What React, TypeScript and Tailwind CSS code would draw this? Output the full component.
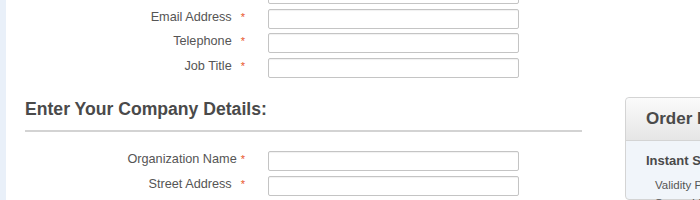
import React from "react";

const topFields = [
  { label: "Email Address", gap: "ml-[9px]" },
  { label: "Telephone", gap: "ml-[9px]" },
  { label: "Job Title", gap: "ml-[9px]" },
];

const companyFields = [
  { label: "Organization Name", gap: "ml-[4px]" },
  { label: "Street Address", gap: "ml-[9px]" },
];

function FieldRow({ label, gap }: { label: string; gap: string }) {
  return (
    <div className="flex items-center h-[20px]">
      <label className="w-[220px] pb-[3px] text-right text-[12.7px] text-[#555] leading-none">
        {label}
        <span className={`${gap} text-[#e8562a] text-[11px]`}>*</span>
      </label>
      <input
        type="text"
        className="ml-[23px] w-[251px] h-[20px] border border-[#c4c4c4] rounded-[2px] bg-white shadow-[inset_0_1px_1px_rgba(0,0,0,0.06)]"
      />
    </div>
  );
}

export default function App() {
  return (
    <div className="flex w-[700px] h-[200px] overflow-hidden bg-white font-['Liberation_Sans',Arial,sans-serif]">
      <div className="w-[6px] shrink-0 bg-[#e9f0f9]" />

      <div className="ml-[19px] w-[557px] shrink-0">
        <div className="-mt-[16px] flex flex-col gap-[4.5px]">
          <div className="flex h-[20px]">
            <div className="ml-[243px] w-[251px] h-[20px] border border-[#c4c4c4] rounded-[2px]" />
          </div>
          {topFields.map((f) => (
            <FieldRow key={f.label} label={f.label} gap={f.gap} />
          ))}
        </div>

        <h2 className="mt-[21px] text-[17.6px] font-bold text-[#4a4a4a] leading-[20px]">
          Enter Your Company Details:
        </h2>
        <div className="mt-[11px] h-[2px] bg-[#d3d3d3]" />

        <div className="mt-[19px] flex flex-col gap-[5px]">
          {companyFields.map((f) => (
            <FieldRow key={f.label} label={f.label} gap={f.gap} />
          ))}
        </div>
      </div>

      <div className="ml-[43px] mt-[97px] w-[200px] shrink-0 border border-[#d4d4d4] rounded-[4px] bg-[#f1f5fa]">
        <div className="h-[43px] flex items-center pl-[20px] rounded-t-[4px] border-b border-[#d4d4d4] bg-gradient-to-b from-[#fbfbfb] to-[#e6e6e6]">
          <span className="text-[17px] font-bold text-[#4a4a4a]">Order Details</span>
        </div>
        <div className="pl-[20px] pt-[12px]">
          <div className="text-[13px] font-bold text-[#4a4a4a] leading-[16px]">Instant SSL</div>
          <div className="mt-[7px] pl-[9px] text-[11.5px] text-[#555] leading-[18px]">Validity Period</div>
          <div className="pl-[9px] text-[11.5px] text-[#555] leading-[18px]">Server Licenses</div>
        </div>
      </div>
    </div>
  );
}
